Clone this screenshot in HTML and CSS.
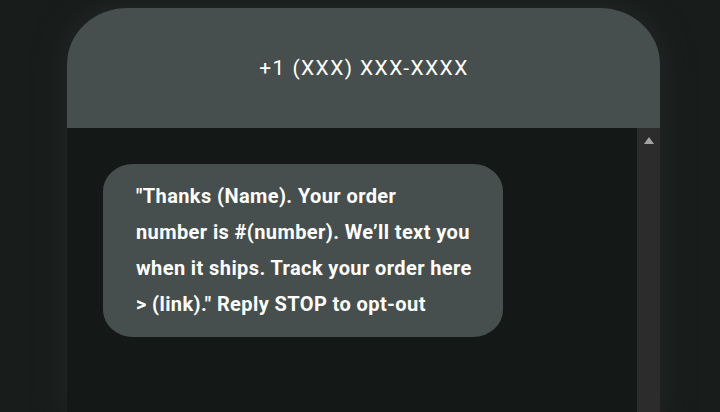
FILE: index.html
```html
<!DOCTYPE html>
<html lang="en">
<head>
<meta charset="utf-8">
<title>Messages</title>
<link rel="stylesheet" href="styles.css">
</head>
<body>
  <div class="phone">
    <header class="phone-header">
      <h1 class="contact">+1 (XXX) XXX-XXXX</h1>
    </header>
    <div class="thread">
      <div class="messages">
        <p class="bubble">"Thanks (Name). Your order<br>number is #(number). We’ll text you<br>when it ships. Track your order here<br>&gt; (link)." Reply STOP to opt-out</p>
      </div>
      <div class="scrollbar">
        <span class="scroll-up"></span>
      </div>
    </div>
  </div>
</body>
</html>
```

FILE: styles.css
```css
html, body {
  margin: 0;
  height: 100%;
  overflow: hidden;
}

body {
  background: #181c1b;
  font-family: Roboto, "Liberation Sans", sans-serif;
  color: #ffffff;
}

.phone {
  width: 593px;
  margin: 8px 0 0 67px;
  height: 404px;
  display: flex;
  flex-direction: column;
  border-radius: 60px 60px 0 0 / 56px 56px 0 0;
  background: #141817;
  box-shadow: 0 0 28px 6px rgba(40, 44, 43, 0.55);
}

.phone-header {
  height: 120px;
  flex: none;
  background: #464f4d;
  border-radius: 60px 60px 0 0 / 56px 56px 0 0;
  display: flex;
  align-items: center;
  justify-content: center;
}

.contact {
  margin: 0 0 0 1px;
  font-size: 21px;
  font-weight: 400;
  letter-spacing: 1.4px;
}

.thread {
  flex: 1;
  display: flex;
  min-height: 0;
}

.messages {
  flex: 1;
  padding: 36px 0 0 36px;
}

.bubble {
  margin: 0;
  width: 340px;
  padding: 14px 27px 15px 33px;
  background: #464f4d;
  border-radius: 30px / 27px;
  font-size: 20px;
  font-weight: 700;
  line-height: 36px;
  letter-spacing: 0.4px;
  white-space: nowrap;
}

.scrollbar {
  width: 23px;
  flex: none;
  background: #2c2c2c;
  display: flex;
  justify-content: center;
  padding-top: 9px;
}

.scroll-up {
  width: 0;
  height: 0;
  border-left: 5px solid transparent;
  border-right: 5px solid transparent;
  border-bottom: 7px solid #a3a3a3;
}
```
